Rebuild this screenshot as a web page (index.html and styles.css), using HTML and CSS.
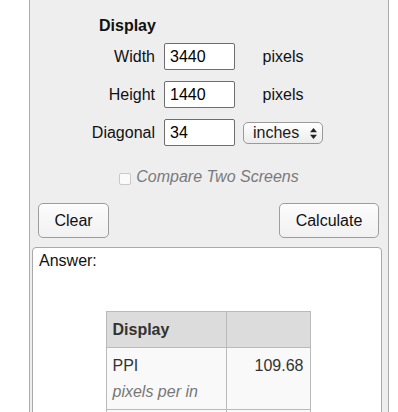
FILE: index.html
```html
<!DOCTYPE html>
<html>
<head>
<meta charset="utf-8">
<link rel="stylesheet" href="styles.css">
</head>
<body>
<div class="panel">
  <div class="heading">Display</div>
  <div class="form-grid">
    <label class="lbl" for="w">Width</label>
    <input class="num" id="w" type="text" value="3440">
    <span class="unit">pixels</span>

    <label class="lbl" for="h">Height</label>
    <input class="num" id="h" type="text" value="1440">
    <span class="unit">pixels</span>

    <label class="lbl" for="d">Diagonal</label>
    <input class="num" id="d" type="text" value="34">
    <span class="unit">
      <span class="select-wrap">
        <select class="sel"><option>inches</option><option>cm</option></select>
        <svg class="arrows" width="7" height="11" viewBox="0 0 7 11"><path d="M3.5 0 L7 4.2 L0 4.2 Z M3.5 11 L7 6.8 L0 6.8 Z" fill="#222"/></svg>
      </span>
    </span>
  </div>

  <div class="compare">
    <input class="chk" type="checkbox" disabled>
    <span class="compare-text">Compare Two Screens</span>
  </div>

  <div class="buttons">
    <button class="btn btn-clear">Clear</button>
    <button class="btn btn-calc">Calculate</button>
  </div>

  <div class="answer">
    <div class="answer-label">Answer:</div>
    <table class="result">
      <colgroup><col class="c1"><col class="c2"></colgroup>
      <thead>
        <tr><th>Display</th><th></th></tr>
      </thead>
      <tbody>
        <tr>
          <td>PPI<span class="sub">pixels per in</span></td>
          <td class="val">109.68</td>
        </tr>
        <tr class="next-row">
          <td></td>
          <td></td>
        </tr>
      </tbody>
    </table>
  </div>
</div>
</body>
</html>
```

FILE: styles.css
```css
html, body {
  margin: 0;
  padding: 0;
  background: #ffffff;
}

body {
  font-family: "Liberation Sans", Arial, Helvetica, sans-serif;
  font-size: 16px;
  line-height: 18px;
  color: #111;
}

.panel {
  box-sizing: border-box;
  width: 360px;
  margin-left: 29px;
  background: #eeeeee;
  border: 1px solid #ababab;
  border-top: none;
  padding-top: 17px;
  padding-bottom: 40px;
}

.heading {
  font-weight: bold;
  margin-left: 69px;
  height: 18px;
  color: #111;
}

.form-grid {
  display: grid;
  grid-template-columns: 71px 71px 80px;
  grid-auto-rows: 27px;
  column-gap: 8px;
  row-gap: 11px;
  align-items: center;
  margin-top: 8px;
  margin-left: 55px;
}

.lbl {
  text-align: right;
  padding-right: 1px;
  white-space: nowrap;
  color: #111;
}

.num {
  box-sizing: border-box;
  width: 71px;
  height: 27px;
  margin: 0;
  padding: 0 5px;
  border: 1px solid #6e6e6e;
  border-radius: 2px;
  background: #fff;
  font-family: inherit;
  font-size: 16px;
  color: #000;
  outline: none;
}

.unit {
  text-align: center;
  color: #111;
  display: flex;
  justify-content: center;
  align-items: center;
}

.select-wrap {
  position: relative;
  display: inline-block;
  width: 80px;
  height: 22px;
}

.sel {
  -webkit-appearance: none;
  appearance: none;
  box-sizing: border-box;
  width: 80px;
  height: 22px;
  margin: 0;
  padding: 0 0 0 9px;
  border: 1px solid #9a9a9a;
  border-radius: 5px;
  background: linear-gradient(#ffffff, #ececec);
  font-family: inherit;
  font-size: 16px;
  line-height: 20px;
  color: #1a1a1a;
  outline: none;
}

.arrows {
  position: absolute;
  left: 67px;
  top: 6px;
  pointer-events: none;
}

.compare {
  display: flex;
  justify-content: center;
  align-items: center;
  gap: 5px;
  margin-top: 22px;
  height: 18px;
}

.chk {
  -webkit-appearance: none;
  appearance: none;
  box-sizing: border-box;
  width: 12px;
  height: 12px;
  margin: 3px 0 0 0;
  border: 1px solid #c9c9c9;
  border-radius: 2px;
  background: #fafafa;
}

.compare-text {
  font-style: italic;
  color: #7a7a7a;
}

.buttons {
  display: flex;
  justify-content: space-between;
  margin: 17px 9px 0 8px;
}

.btn {
  box-sizing: border-box;
  height: 35px;
  margin: 0;
  padding: 0;
  border: 1px solid #9d9d9d;
  border-radius: 5px;
  background: linear-gradient(#fcfcfc, #f1f1f1);
  font-family: inherit;
  font-size: 16px;
  color: #111;
}

.btn-clear {
  width: 71px;
}

.btn-calc {
  width: 100px;
}

.answer {
  box-sizing: border-box;
  width: 350px;
  margin: 9px 0 0 2px;
  background: #ffffff;
  border: 1px solid #a9a9a9;
  border-radius: 4px 4px 0 0;
  padding: 4px 6px 20px 6px;
}

.answer-label {
  color: #111;
}

.result {
  margin: 41px auto 0 auto;
  border-collapse: collapse;
  table-layout: fixed;
  width: 204px;
  position: relative;
  left: 1px;
  color: #333;
}

.result .c1 {
  width: 120px;
}

.result .c2 {
  width: 84px;
}

.result th {
  background: #dcdcdc;
  border: 1px solid #bababa;
  text-align: left;
  font-weight: bold;
  padding: 9px 6px 8px 6px;
  height: 18px;
  color: #333;
}

.result td {
  background: #f9f9f9;
  border: 1px solid #bababa;
  padding: 9px 6px 8px 6px;
  vertical-align: top;
}

.result td.val {
  text-align: right;
}

.result .next-row td {
  height: 40px;
}

.sub {
  display: block;
  margin-top: 8px;
  font-style: italic;
  color: #777;
}
```
